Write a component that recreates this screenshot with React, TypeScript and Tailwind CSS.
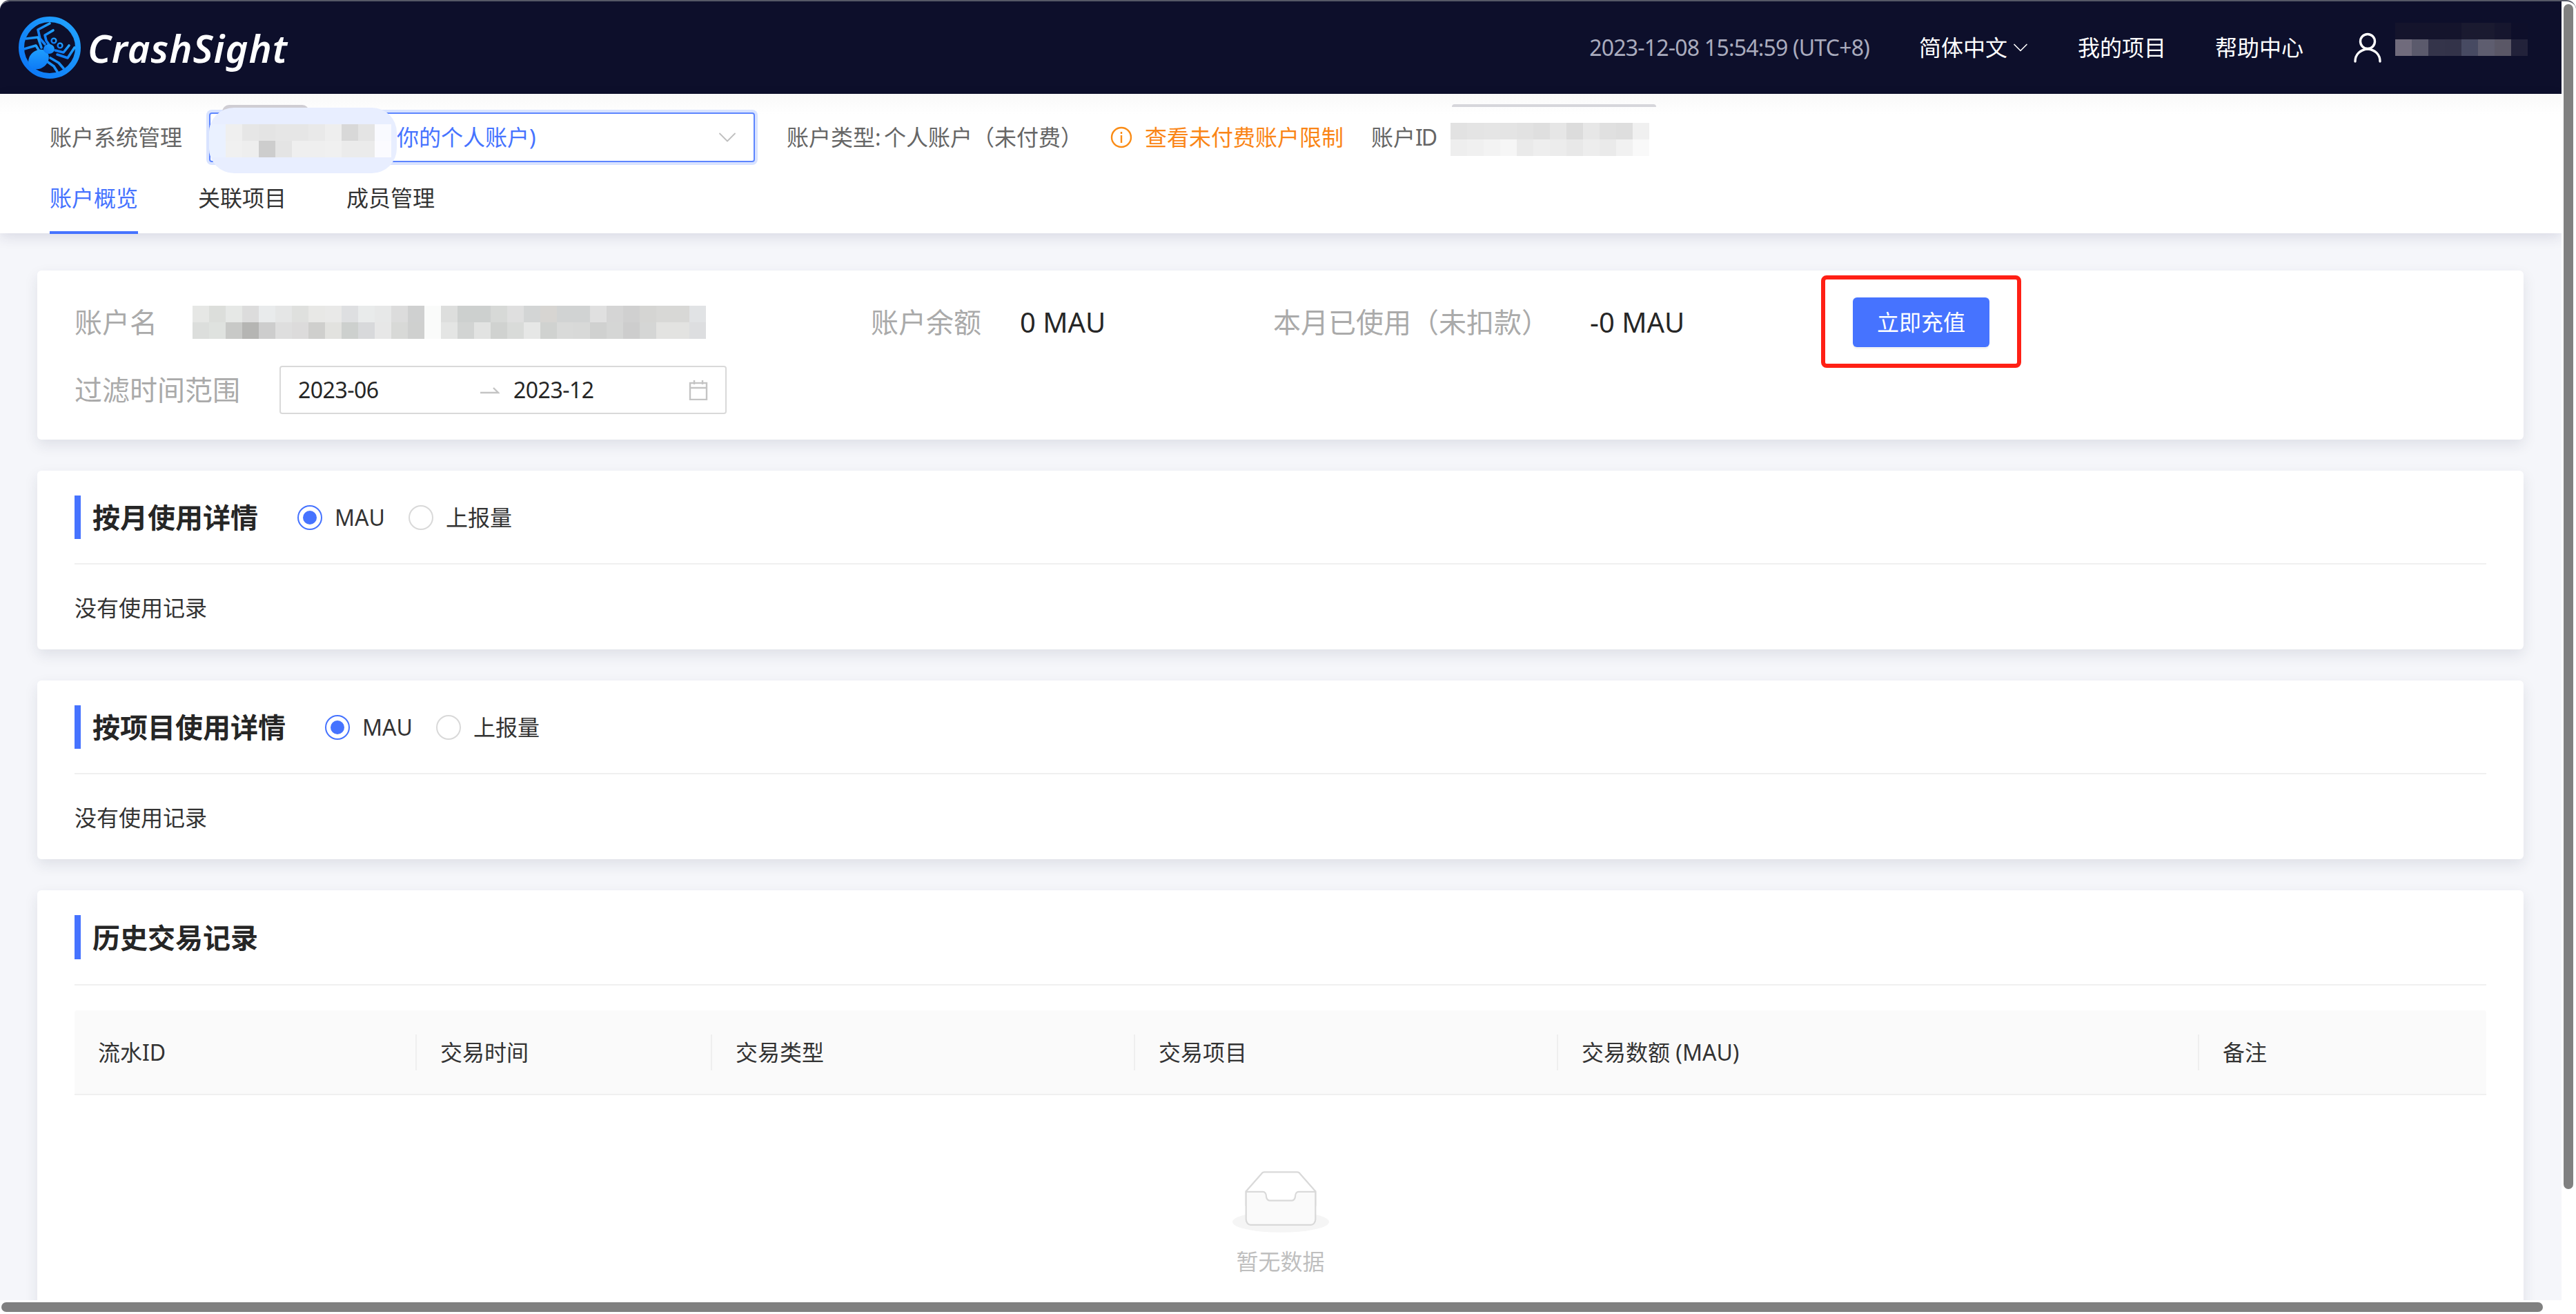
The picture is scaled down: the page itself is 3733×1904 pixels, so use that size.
import { ChevronDown } from "lucide-react";

const nameTop = ["#e6e7e5","#dcdedb","#e6e8e6","#dcdcdc","#e9ebec","#e5e6e6","#dfe0de","#e8e8e6","#e9e9e8","#dedfe1","#e9ebeb","#e7e8e8","#dcdcdc","#cfd0d0","#fafbfa","#dddedd","#cdd0cf","#cdd0cf","#d7d9d7","#dfdfdf","#d3d5d5","#d7d5d2","#d1d3d3","#d1d3d3","#e0e0e0","#d5d5d5","#d0d0d0","#d5d5d3","#d8d8d6","#d8d8d6","#e1e3e5"];
const nameBottom = ["#dcdedc","#dfe2df","#c8c9c7","#b5b5b3","#cdcdcd","#dedede","#dcdbdb","#cfcfcd","#e2e2df","#cdd0ce","#d8d9db","#e7e7e7","#d8d9d7","#cfd0cf","#fafbfa","#e4e5e4","#d2d4d3","#e2e3e2","#d0d2d0","#d9dbd9","#e6e7e6","#d0d2d0","#d9dad9","#d8d9d8","#d0d1d0","#d5d6d5","#cdcdcd","#d5d6d5","#e3e3e1","#e3e3e1","#dddee0"];
const selectTop = ["#eaf1ff","#efefef","#e6e6e6","#e4e4e4","#e6e6e6","#e6e6e6","#e9e9e9","#eeeeee","#d8d8d8","#e4e4e4","#f9faff"];
const selectBottom = ["#eaf1ff","#f0f0f0","#eeeeee","#cdcdcd","#e4e4e4","#efefef","#efefef","#f0f0f0","#ebebeb","#ebebeb","#fbfbff"];
const idTop = ["#e2e2e2","#e4e4e4","#e5e5e5","#e4e4e4","#e2e2e2","#dfdfdf","#e6e6e6","#dcdcdc","#e7e7e7","#e0e0e0","#dedede","#f0f0f0"];
const idBottom = ["#eeeeee","#f0f0f0","#f3f3f3","#f6f6f6","#eaeaea","#eeeeee","#ececec","#e8e8e8","#ededed","#eaeaea","#f1f1f1","#f9f9f9"];
const userTop = ["#14142c","#14142c","#14142c","#14142c","#1a1a30","#1a1a30","#16162e","#0e0f2a"];
const userBottom = ["#706b7c","#5b5a6c","#34344a","#333349","#474a62","#5e5d6f","#5a5766","#22223a"];

function Mosaic({ rows }: { rows: string[][] }) {
  return (
    <div className="flex flex-col">
      {rows.map((row, i) => (
        <div key={i} className="flex">
          {row.map((c, j) => (
            <div key={j} className="h-[24px] w-[24px]" style={{ background: c }} />
          ))}
        </div>
      ))}
    </div>
  );
}

function Logo() {
  const legs = [
    "M45 10 L28 19 L31 32 L38 40",
    "M50 20 L38 27 L40 35 L45 42",
    "M11 32 L28 30 L33 45",
    "M8 47 L25 42 L30 50",
    "M81 45 L71 60 L56 55",
    "M73 42 L65 52 L53 49",
    "M65 75 L58 67 L46 60",
    "M56 80 L51 72 L41 65",
  ];
  return (
    <svg width="90" height="90" viewBox="0 0 90 90" fill="none">
      <defs>
        <linearGradient id="lg" x1="0" y1="1" x2="1" y2="0">
          <stop offset="0" stopColor="#0a74f5" />
          <stop offset="1" stopColor="#22a5ff" />
        </linearGradient>
      </defs>
      <circle cx="45" cy="45" r="41" stroke="url(#lg)" strokeWidth="8" />
      {legs.map((d) => (
        <path key={d} d={d} stroke="url(#lg)" strokeWidth="3.6" strokeLinecap="round" strokeLinejoin="round" />
      ))}
      <ellipse cx="29" cy="62" rx="16" ry="13" transform="rotate(-40 29 62)" fill="url(#lg)" />
      <ellipse cx="44" cy="47" rx="8" ry="7" fill="url(#lg)" />
      <circle cx="51" cy="35" r="3.4" stroke="url(#lg)" strokeWidth="2.4" />
      <circle cx="60" cy="42" r="3.4" stroke="url(#lg)" strokeWidth="2.4" />
    </svg>
  );
}

function Radio({ label, checked }: { label: string; checked?: boolean }) {
  return (
    <div className="flex items-center">
      <span className={`flex h-[36px] w-[36px] items-center justify-center rounded-full border-2 ${checked ? "border-[#4673ff]" : "border-[#d9d9d9]"}`}>
        {checked && <span className="h-[20px] w-[20px] rounded-full bg-[#4673ff]" />}
      </span>
      <span className="ml-[18px] text-[32px] leading-[44px] text-[#333]">{label}</span>
    </div>
  );
}

function UsageCard({ title, radios }: { title: string; radios?: boolean }) {
  return (
    <section className="h-[259px] rounded-[6px] bg-white px-[54px] pt-[36px] shadow-[0_8px_20px_rgba(30,35,70,0.1)]">
      <div className="flex h-[63px] items-center border-l-[9px] border-[#4673ff] pl-[17px]">
        <h2 className="text-[40px] font-bold leading-[63px] text-[#262626]">{title}</h2>
        {radios && (
          <div className="ml-[57px] flex gap-[34px]">
            <Radio label="MAU" checked />
            <Radio label="上报量" />
          </div>
        )}
      </div>
      <div className="mt-[35px] border-t-2 border-[#f0f0f0] pt-[40px] text-[32px] leading-[46px] text-[#333]">没有使用记录</div>
    </section>
  );
}

const columns = [
  { label: "流水ID", w: "w-[494px]" },
  { label: "交易时间", w: "w-[428px]" },
  { label: "交易类型", w: "w-[613px]" },
  { label: "交易项目", w: "w-[613px]" },
  { label: "交易数额 (MAU)", w: "w-[929px]" },
  { label: "备注", w: "flex-1" },
];

export default function App() {
  return (
    <div className="relative h-[1904px] w-[3733px] overflow-hidden rounded-[14px] border-t-2 border-[#555866] bg-white font-['Noto_Sans','Noto_Sans_CJK_SC',sans-serif]">
      <div className="h-[1882px] w-[3712px] overflow-hidden bg-[#f5f6fa]">
        <header className="flex h-[134px] items-center justify-between bg-[#0d0f2b] pl-[27px] pr-[49px]">
          <div className="flex items-center">
            <Logo />
            <span className="ml-[10px] text-[56px] font-semibold italic leading-none tracking-[1px] text-white">CrashSight</span>
          </div>
          <div className="flex items-center text-[32px] text-white">
            <span className="tracking-[-0.8px] text-[#a9abbd]">2023-12-08 15:54:59 (UTC+8)</span>
            <span className="ml-[72px]">简体中文</span>
            <ChevronDown className="ml-[1px] h-[36px] w-[36px]" strokeWidth={1.1} />
            <span className="ml-[65px]">我的项目</span>
            <span className="ml-[71px]">帮助中心</span>
            <svg className="ml-[72px]" width="42" height="44" viewBox="0 0 42 44" fill="none" stroke="#fff" strokeWidth="3.4">
              <circle cx="21" cy="13" r="10.5" />
              <path d="M3 42c0-10 7-17 18-18 11 1 18 8 18 18" strokeLinecap="round" />
            </svg>
            <div className="ml-[19px]">
              <Mosaic rows={[userTop, userBottom]} />
              <div className="h-[24px]" />
            </div>
          </div>
        </header>

        <div className="relative z-10 h-[202px] bg-[linear-gradient(#f9f9f9,#ffffff_30px)] pt-[27px] shadow-[0_6px_18px_rgba(30,35,80,0.12)]">
          <div className="flex h-[72px] items-center pl-[72px] text-[32px] text-[#666]">
            <span className="w-[192px] shrink-0 whitespace-nowrap">账户系统管理</span>
            <div className="relative ml-[39px] flex h-[72px] w-[791px] items-center justify-end rounded-[4px] border-2 border-[#5c85ff] pr-[16px] shadow-[0_0_0_4px_#d9e3ff]">
              <ChevronDown className="h-[44px] w-[44px] text-[#bfbfbf]" strokeWidth={1} />
              <span className="absolute left-[270px] text-[#4673ff]">你的个人账户)</span>
              <div className="absolute left-[17px] top-[-13px] h-[12px] w-[126px] rounded-t-[10px] bg-[#cfcdd3]" />
              <div className="absolute left-[-2px] top-[-9px] flex h-[95px] w-[272px] items-center overflow-hidden rounded-[36px] bg-[#e8eeff]">
                <Mosaic rows={[selectTop, selectBottom]} />
              </div>
            </div>
            <span className="ml-[46px] shrink-0 whitespace-nowrap">账户类型<span className="tracking-[-2px]">: </span>个人账户（未付费）</span>
            <svg className="ml-[40px] shrink-0" width="32" height="32" viewBox="0 0 32 32" fill="none" stroke="#fa8c16" strokeWidth="2.4">
              <circle cx="16" cy="16" r="14" />
              <path d="M16 13v11M16 8v3" />
            </svg>
            <span className="ml-[18px] shrink-0 whitespace-nowrap text-[#fa8516]">查看未付费账户限制</span>
            <span className="ml-[40px] shrink-0 whitespace-nowrap">账户<span className="tracking-[-2px]">ID</span></span>
            <div className="relative mt-[6px] shrink-0 pl-[21px]">
              <div className="absolute left-[23px] top-[-27px] h-[4px] w-[296px] rounded-t-[10px] bg-[#d6d6db]" />
              <Mosaic rows={[idTop, idBottom]} />
            </div>
          </div>
          <nav className="mt-[29px] flex gap-[87px] pl-[72px] text-[32px] leading-[46px] text-[#333]">
            <span className="relative text-[#4673ff]">
              账户概览
              <span className="absolute left-0 right-0 top-[71px] h-[4px] bg-[#4673ff]" />
            </span>
            <span>关联项目</span>
            <span>成员管理</span>
          </nav>
        </div>

        <main className="flex flex-col gap-[45px] pl-[54px] pr-[55px] pt-[54px]">
          <section className="relative h-[245px] rounded-[6px] bg-white px-[54px] pt-[51px] shadow-[0_8px_20px_rgba(30,35,70,0.1)]">
            <div className="flex h-[48px] items-center text-[40px]">
              <span className="w-[171px] text-[#aaa]">账户名</span>
              <Mosaic rows={[nameTop, nameBottom]} />
              <span className="ml-[239px] w-[216px] text-[#aaa]">账户余额</span>
              <span className="w-[367px] text-[#262626]">0 MAU</span>
              <span className="w-[459px] text-[#aaa]">本月已使用（未扣款）</span>
              <span className="w-[381px] text-[#262626]">-0 MAU</span>
              <button type="button" className="h-[72px] w-[198px] rounded-[6px] bg-[#4673ff] text-[32px] text-white shadow-[0_3px_0_rgba(0,0,0,0.04)]">立即充值</button>
            </div>
            <div className="mt-[39px] flex items-center">
              <span className="w-[297px] text-[40px] text-[#aaa]">过滤时间范围</span>
              <div className="flex h-[70px] w-[648px] items-center rounded-[4px] border-2 border-[#d9d9d9] pl-[25px] pr-[25px] text-[32px] text-[#262626]">
                <span className="w-[262px] tracking-[-0.5px]">2023-06</span>
                <svg width="30" height="16" viewBox="0 0 30 16" fill="none" stroke="#c4c4c4" strokeWidth="2.4">
                  <path d="M2 12h26l-7-7" />
                </svg>
                <span className="ml-[20px] flex-1 tracking-[-0.5px]">2023-12</span>
                <svg width="28" height="30" viewBox="0 0 28 30" fill="none" stroke="#c4c4c4" strokeWidth="2.4">
                  <rect x="2" y="5" width="24" height="24" />
                  <path d="M2 12h24M8 1v6M20 1v6" />
                </svg>
              </div>
            </div>
            <div className="absolute left-[2585px] top-[7px] h-[134px] w-[290px] rounded-[8px] border-[6px] border-[#ff2015]" />
          </section>

          <UsageCard title="按月使用详情" radios />
          <UsageCard title="按项目使用详情" radios />

          <section className="min-h-[700px] rounded-[6px] bg-white px-[54px] pt-[36px] shadow-[0_8px_20px_rgba(30,35,70,0.1)]">
            <div className="flex h-[64px] items-center border-l-[9px] border-[#4673ff] pl-[17px]">
              <h2 className="text-[40px] font-bold leading-[63px] text-[#262626]">历史交易记录</h2>
            </div>
            <div className="mt-[36px] border-t-2 border-[#f0f0f0] pt-[36px]">
              <div className="flex h-[123px] items-center rounded-t-[4px] border-b-2 border-[#f0f0f0] bg-[#fafafa] text-[32px] text-[#333]">
                {columns.map((c, i) => (
                  <div key={c.label} className={`flex h-[52px] items-center pl-[34px] ${c.w} ${i > 0 ? "border-l-2 border-[#efefef]" : ""}`}>
                    {c.label}
                  </div>
                ))}
              </div>
              <div className="flex flex-col items-center pt-[109px]">
                <svg className="h-[90px] w-[140px]" viewBox="0 0 64 41">
                  <g transform="translate(0 1)" fill="none" fillRule="evenodd">
                    <ellipse fill="#f5f5f5" cx="32" cy="33" rx="32" ry="7" />
                    <g fillRule="nonzero" stroke="#d9d9d9">
                      <path d="M55 12.76L44.854 1.258C44.367.474 43.656 0 42.907 0H21.093c-.749 0-1.46.474-1.947 1.257L9 12.761V22h46v-9.24z" />
                      <path d="M41.613 15.931c0-1.605.994-2.93 2.227-2.931H55v18.137C55 33.26 53.68 35 52.05 35h-40.1C10.32 35 9 33.259 9 31.137V13h11.16c1.233 0 2.227 1.323 2.227 2.928v.022c0 1.605 1.005 2.901 2.237 2.901h14.752c1.232 0 2.237-1.308 2.237-2.913v-.007z" fill="#fafafa" />
                    </g>
                  </g>
                </svg>
                <span className="mt-[19px] text-[32px] leading-[46px] text-[#bfbfbf]">暂无数据</span>
              </div>
            </div>
          </section>
        </main>
      </div>

      <div className="absolute right-[4px] top-[4px] h-[1717px] w-[14px] rounded-full bg-[#808080]" />
      <div className="absolute bottom-[3px] left-[2px] h-[14px] w-[3683px] rounded-full bg-[#808080]" />
    </div>
  );
}
